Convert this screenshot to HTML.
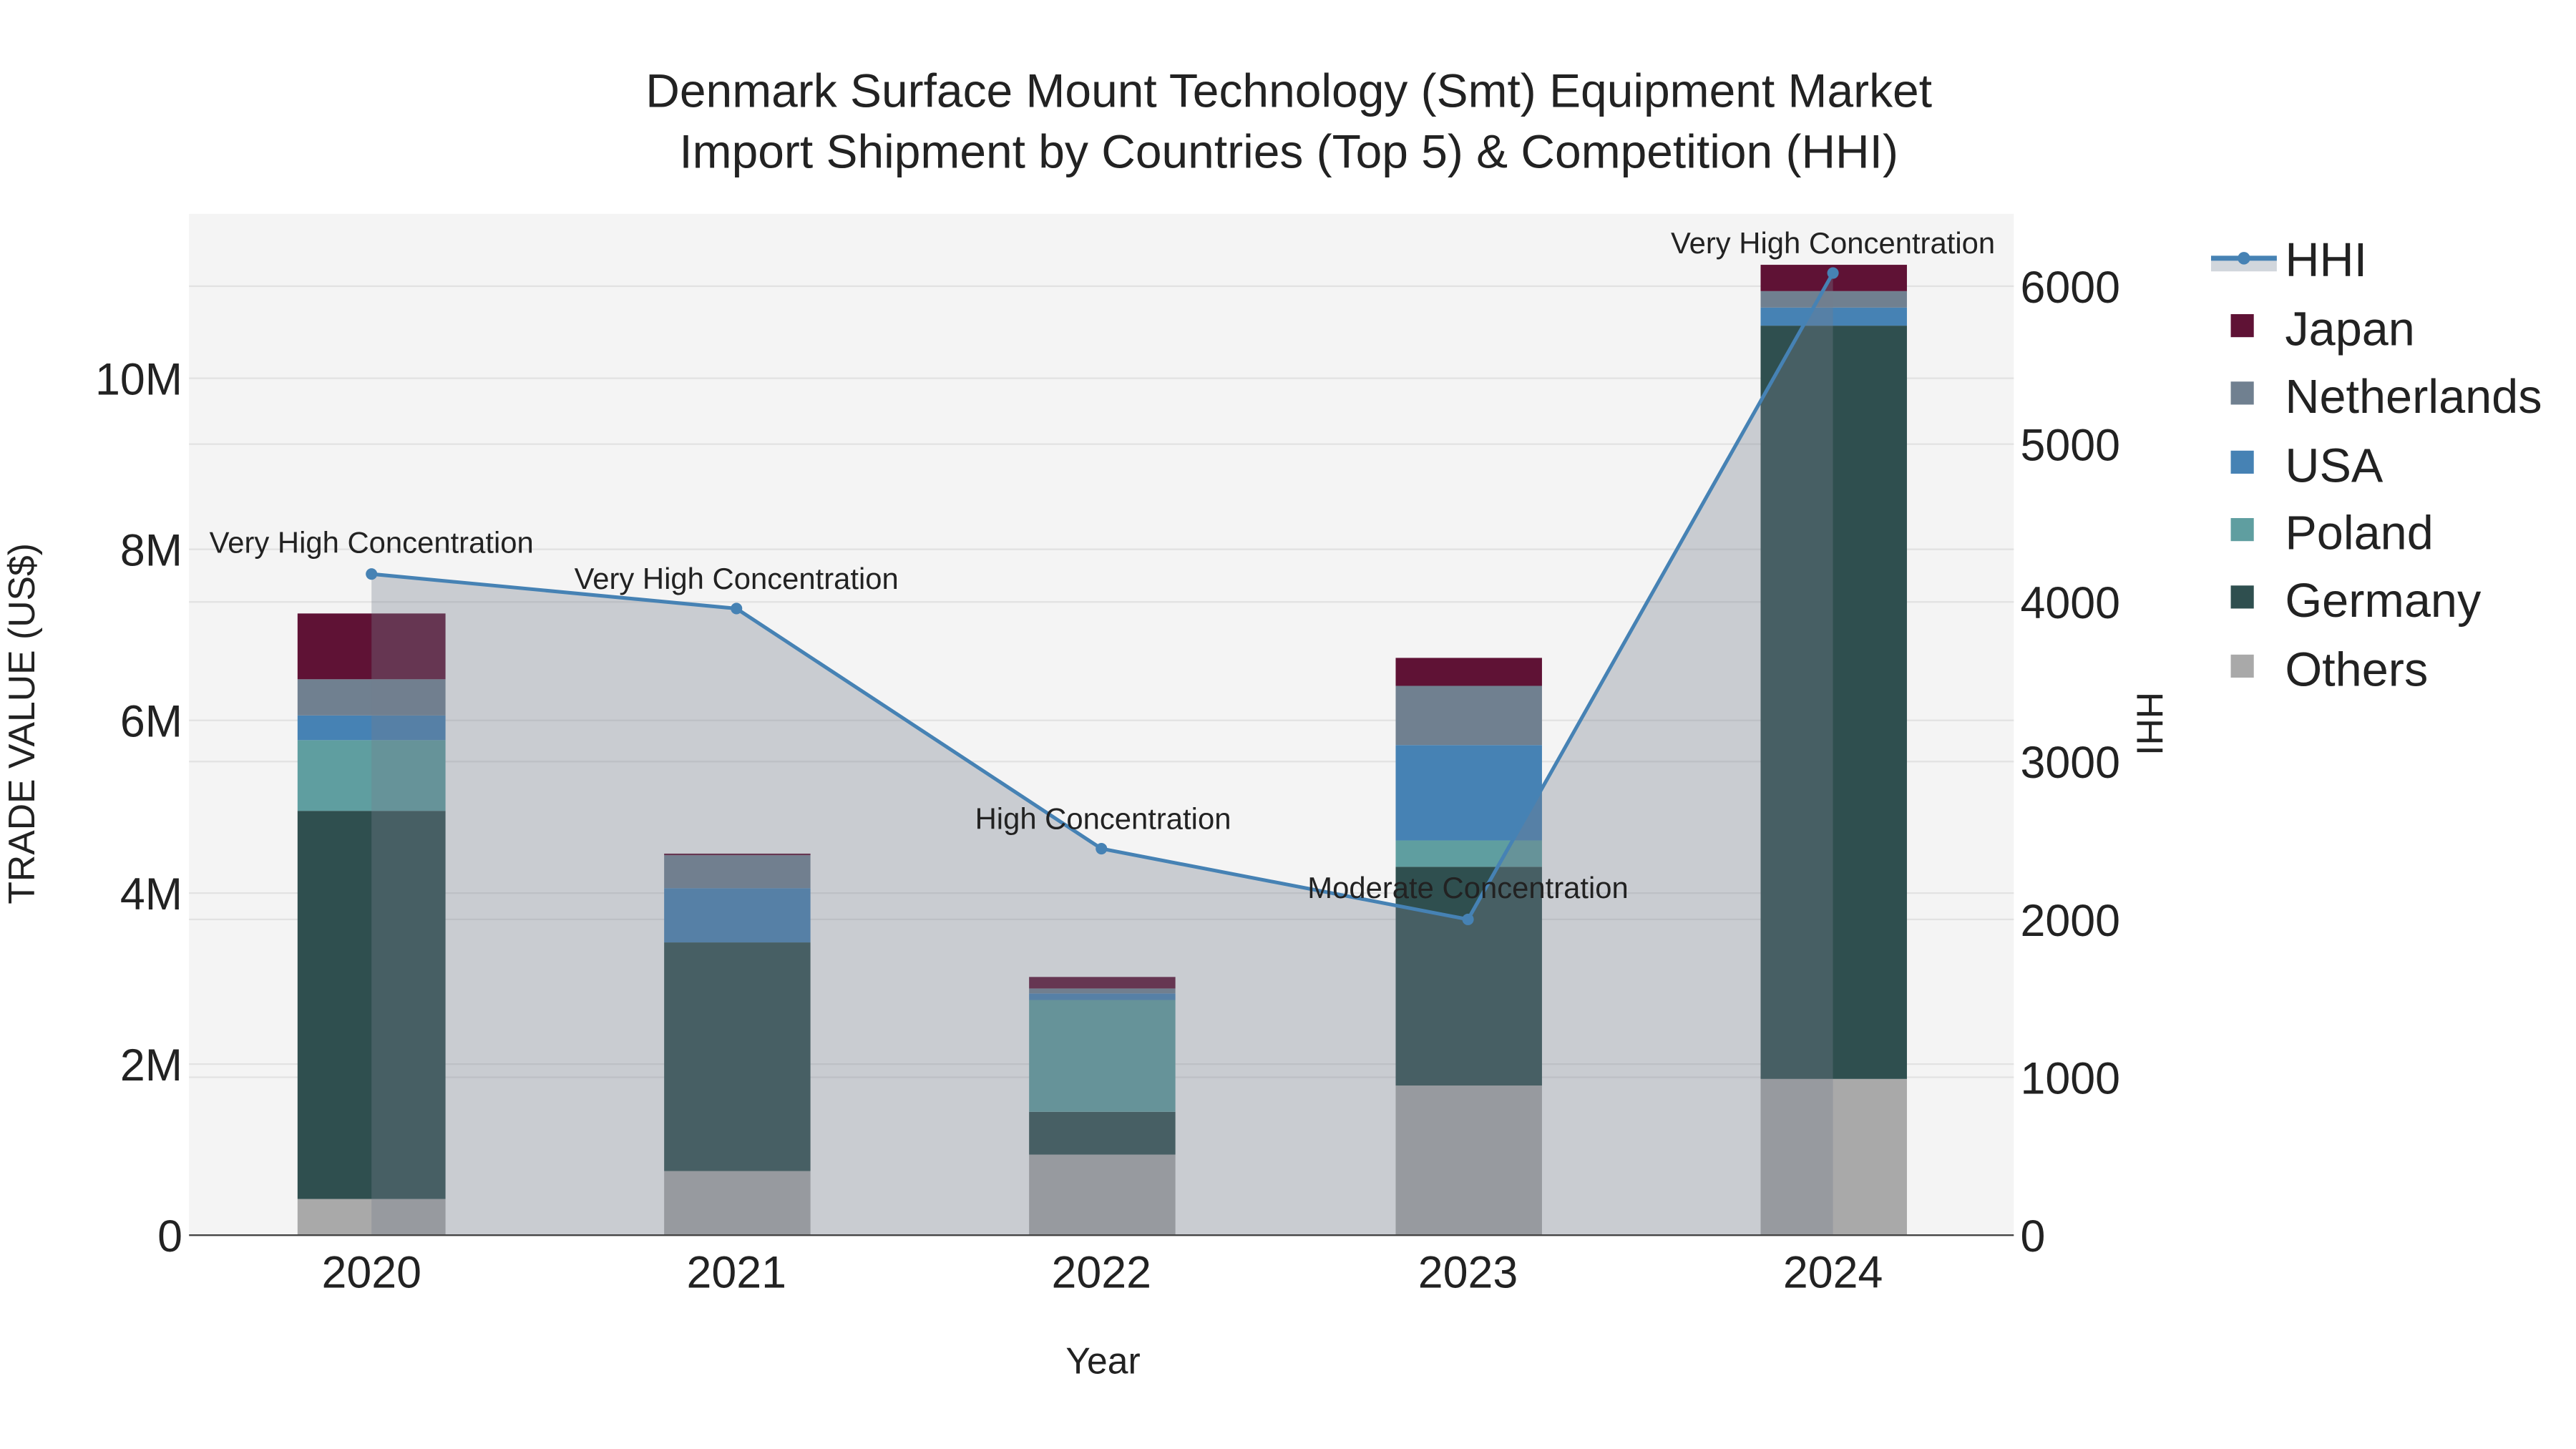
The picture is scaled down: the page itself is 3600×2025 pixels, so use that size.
<!DOCTYPE html>
<html><head><meta charset="utf-8"><style>
html,body{margin:0;padding:0;background:#fff;}
svg{display:block;}
text{font-family:"Liberation Sans",Arial,sans-serif;fill:#222;}
</style></head><body>
<svg width="3600" height="2025" viewBox="0 0 1567 881" preserveAspectRatio="none" xmlns="http://www.w3.org/2000/svg">
<rect width="1567" height="881" fill="#fff"/>
<rect x="115" y="130" width="1110" height="621" fill="#f4f4f4"/>
<g stroke="#e2e2e2" stroke-width="1">
<line x1="115" x2="1225" y1="647" y2="647"/><line x1="115" x2="1225" y1="543" y2="543"/>
<line x1="115" x2="1225" y1="438" y2="438"/><line x1="115" x2="1225" y1="334" y2="334"/>
<line x1="115" x2="1225" y1="230" y2="230"/>
<line x1="115" x2="1225" y1="655" y2="655"/><line x1="115" x2="1225" y1="559" y2="559"/>
<line x1="115" x2="1225" y1="463" y2="463"/><line x1="115" x2="1225" y1="366" y2="366"/>
<line x1="115" x2="1225" y1="270" y2="270"/><line x1="115" x2="1225" y1="174" y2="174"/>
</g>
<g>
<rect x="181" y="729" width="90" height="22" fill="#a9a9a9"/>
<rect x="181" y="493" width="90" height="236" fill="#2f4f4f"/>
<rect x="181" y="450" width="90" height="43" fill="#5f9ea0"/>
<rect x="181" y="435" width="90" height="15" fill="#4682b4"/>
<rect x="181" y="413" width="90" height="22" fill="#708090"/>
<rect x="181" y="373" width="90" height="40" fill="#5f1235"/>
<rect x="404" y="712" width="89" height="39" fill="#a9a9a9"/>
<rect x="404" y="573" width="89" height="139" fill="#2f4f4f"/>
<rect x="404" y="540" width="89" height="33" fill="#4682b4"/>
<rect x="404" y="520" width="89" height="20" fill="#708090"/>
<rect x="404" y="519" width="89" height="1" fill="#5f1235"/>
<rect x="626" y="702" width="89" height="49" fill="#a9a9a9"/>
<rect x="626" y="676" width="89" height="26" fill="#2f4f4f"/>
<rect x="626" y="608" width="89" height="68" fill="#5f9ea0"/>
<rect x="626" y="604" width="89" height="4" fill="#4682b4"/>
<rect x="626" y="601" width="89" height="3" fill="#708090"/>
<rect x="626" y="594" width="89" height="7" fill="#5f1235"/>
<rect x="849" y="660" width="89" height="91" fill="#a9a9a9"/>
<rect x="849" y="527" width="89" height="133" fill="#2f4f4f"/>
<rect x="849" y="511" width="89" height="16" fill="#5f9ea0"/>
<rect x="849" y="453" width="89" height="58" fill="#4682b4"/>
<rect x="849" y="417" width="89" height="36" fill="#708090"/>
<rect x="849" y="400" width="89" height="17" fill="#5f1235"/>
<rect x="1071" y="656" width="89" height="95" fill="#a9a9a9"/>
<rect x="1071" y="198" width="89" height="458" fill="#2f4f4f"/>
<rect x="1071" y="187" width="89" height="11" fill="#4682b4"/>
<rect x="1071" y="177" width="89" height="10" fill="#708090"/>
<rect x="1071" y="161" width="89" height="16" fill="#5f1235"/>
</g>
<polygon points="226,349 448,370 670,516 893,559 1115,166 1115,751 226,751" fill="rgb(116,126,140)" fill-opacity="0.34"/>
<line x1="115" x2="1225" y1="751" y2="751" stroke="#444" stroke-width="1"/>
<polyline points="226,349 448,370 670,516 893,559 1115,166" fill="none" stroke="#4682b4" stroke-width="2.2"/>
<g fill="#4682b4"><circle cx="226" cy="349" r="3.5"/><circle cx="448" cy="370" r="3.5"/><circle cx="670" cy="516" r="3.5"/><circle cx="893" cy="559" r="3.5"/><circle cx="1115" cy="166" r="3.5"/></g>
<g font-size="18.2" text-anchor="middle">
<text x="226" y="336">Very High Concentration</text>
<text x="448" y="358">Very High Concentration</text>
<text x="671" y="504">High Concentration</text>
<text x="893" y="546">Moderate Concentration</text>
<text x="1115" y="154">Very High Concentration</text>
</g>
<g font-size="28.7" text-anchor="middle">
<text x="784" y="65">Denmark Surface Mount Technology (Smt) Equipment Market</text>
<text x="784" y="102">Import Shipment by Countries (Top 5) &amp; Competition (HHI)</text>
</g>
<g font-size="27.3" text-anchor="end">
<text x="111" y="761">0</text><text x="111" y="657">2M</text><text x="111" y="553">4M</text>
<text x="111" y="448">6M</text><text x="111" y="344">8M</text><text x="111" y="240">10M</text>
</g>
<g font-size="27.3" text-anchor="start">
<text x="1229" y="761">0</text><text x="1229" y="665">1000</text><text x="1229" y="569">2000</text>
<text x="1229" y="473">3000</text><text x="1229" y="376">4000</text><text x="1229" y="280">5000</text>
<text x="1229" y="184">6000</text>
</g>
<g font-size="27.3" text-anchor="middle">
<text x="226" y="783">2020</text><text x="448" y="783">2021</text><text x="670" y="783">2022</text>
<text x="893" y="783">2023</text><text x="1115" y="783">2024</text>
</g>
<text x="671" y="835" font-size="22.5" text-anchor="middle">Year</text>
<text transform="translate(21,440) rotate(-90)" font-size="22.5" text-anchor="middle">TRADE VALUE (US$)</text>
<text transform="translate(1300,440) rotate(90)" font-size="22.5" text-anchor="middle">HHI</text>
<rect x="1345" y="157" width="40" height="8" fill="#d1d6dc"/>
<line x1="1345" x2="1385" y1="157" y2="157" stroke="#4682b4" stroke-width="3"/>
<circle cx="1365" cy="157" r="3.8" fill="#4682b4"/>
<g font-size="29">
<text x="1390" y="168">HHI</text>
<rect x="1357" y="191" width="14" height="14" fill="#5f1235"/><text x="1390" y="210">Japan</text>
<rect x="1357" y="232" width="14" height="14" fill="#708090"/><text x="1390" y="251">Netherlands</text>
<rect x="1357" y="274" width="14" height="14" fill="#4682b4"/><text x="1390" y="293">USA</text>
<rect x="1357" y="315" width="14" height="14" fill="#5f9ea0"/><text x="1390" y="334">Poland</text>
<rect x="1357" y="356" width="14" height="14" fill="#2f4f4f"/><text x="1390" y="375">Germany</text>
<rect x="1357" y="398" width="14" height="14" fill="#a9a9a9"/><text x="1390" y="417">Others</text>
</g>
</svg>
</body></html>
